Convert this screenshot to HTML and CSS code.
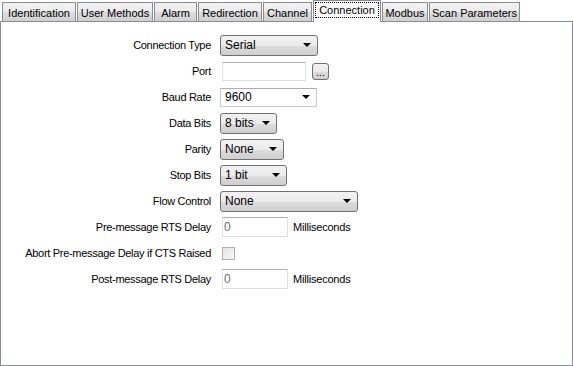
FILE: index.html
```html
<!DOCTYPE html>
<html lang="en">
<head>
    <meta charset="UTF-8">
    <title>Connection</title>
    <link rel="stylesheet" href="styles.css">
</head>
<body>
    <div class="tabs">
        <div class="tab t-ident">Identification</div>
        <div class="tab t-user">User Methods</div>
        <div class="tab t-alarm">Alarm</div>
        <div class="tab t-redir">Redirection</div>
        <div class="tab t-chan">Channel</div>
        <div class="tab active t-conn"><span class="focus">Connection</span></div>
        <div class="tab t-mod">Modbus</div>
        <div class="tab t-scan">Scan Parameters</div>
    </div>

    <div class="panel">
        <div class="row">
            <div class="label">Connection Type</div>
            <div class="combo raised w-type">Serial<span class="arrow"></span></div>
        </div>
        <div class="row">
            <div class="label">Port</div>
            <div class="textbox w-port"></div>
            <div class="browse">...</div>
        </div>
        <div class="row">
            <div class="label">Baud Rate</div>
            <div class="combo flat w-baud">9600<span class="arrow"></span></div>
        </div>
        <div class="row">
            <div class="label">Data Bits</div>
            <div class="combo raised w-data">8 bits<span class="arrow"></span></div>
        </div>
        <div class="row">
            <div class="label">Parity</div>
            <div class="combo raised w-parity">None<span class="arrow"></span></div>
        </div>
        <div class="row">
            <div class="label">Stop Bits</div>
            <div class="combo raised w-stop">1 bit<span class="arrow"></span></div>
        </div>
        <div class="row">
            <div class="label">Flow Control</div>
            <div class="combo raised w-flow">None<span class="arrow"></span></div>
        </div>
        <div class="row">
            <div class="label">Pre-message RTS Delay</div>
            <div class="textbox w-delay">0</div>
            <div class="unit">Milliseconds</div>
        </div>
        <div class="row">
            <div class="label">Abort Pre-message Delay if CTS Raised</div>
            <div class="checkbox"></div>
        </div>
        <div class="row">
            <div class="label">Post-message RTS Delay</div>
            <div class="textbox w-delay">0</div>
            <div class="unit">Milliseconds</div>
        </div>
    </div>
</body>
</html>
```

FILE: styles.css
```css
body {
    margin: 0;
    width: 573px;
    height: 366px;
    background: #ffffff;
    font-family: "Liberation Sans", Arial, sans-serif;
    font-size: 11px;
    color: #000000;
    overflow: hidden;
}

/* tab strip */
.tabs {
    display: flex;
    align-items: flex-end;
    height: 21px;
    padding-left: 2px;
    position: relative;
    z-index: 1;
}

.tab {
    box-sizing: border-box;
    height: 19px;
    margin-right: 1px;
    border: 1px solid #898c95;
    border-bottom: none;
    background: linear-gradient(#f2f2f2 0%, #ebebeb 50%, #dddddd 51%, #cfcfcf 100%);
    display: flex;
    align-items: center;
    justify-content: center;
    padding-top: 1px;
    white-space: nowrap;
}

.tab.active {
    height: 22px;
    margin-bottom: -1px;
    background: #ffffff;
    padding-top: 0;
    padding-bottom: 3px;
}

.focus {
    outline: 1px dotted #000000;
    outline-offset: 1px;
    padding: 0 2px;
}

.t-ident { width: 74px; }
.t-user { width: 76px; }
.t-alarm { width: 43px; }
.t-redir { width: 64px; }
.t-chan { width: 49px; }
.t-conn { width: 68px; }
.t-mod { width: 46px; }
.t-scan { width: 91px; }

/* page */
.panel {
    box-sizing: border-box;
    height: 345px;
    border: 1px solid #898c95;
    padding-top: 10px;
}

.row {
    display: flex;
    align-items: center;
    height: 26px;
}

.label {
    width: 210px;
    text-align: right;
    margin-right: 9px;
    white-space: nowrap;
    letter-spacing: -0.3px;
}

.combo {
    box-sizing: border-box;
    position: relative;
    display: flex;
    align-items: center;
    padding-left: 4px;
    font-size: 12px;
}

.combo.raised {
    height: 21px;
    border: 1px solid #707070;
    border-radius: 3px;
    background: linear-gradient(#f2f2f2 0%, #ebebeb 50%, #dddddd 51%, #cfcfcf 100%);
}

.combo.flat {
    height: 19px;
    border: 1px solid #c5c9d0;
    border-top-color: #abadb3;
    background: #ffffff;
}

.arrow {
    position: absolute;
    right: 6px;
    top: 50%;
    margin-top: -2px;
    width: 0;
    height: 0;
    border-left: 4px solid transparent;
    border-right: 4px solid transparent;
    border-top: 4px solid #000000;
}

.w-type { width: 98px; height: 22px; }
.w-baud { width: 97px; }
.w-data { width: 57px; }
.w-parity { width: 64px; }
.w-stop { width: 67px; }
.w-flow { width: 138px; }

.textbox {
    box-sizing: border-box;
    margin-left: 2px;
    height: 20px;
    border: 1px solid #dbdfe6;
    border-top-color: #abadb3;
    border-left-color: #e2e3ea;
    background: #ffffff;
    color: #6d6d6d;
    font-size: 12px;
    padding-left: 1px;
    display: flex;
    align-items: center;
}

.w-port { width: 84px; height: 19px; }
.w-delay { width: 66px; }

.browse {
    box-sizing: border-box;
    width: 17px;
    height: 17px;
    margin-left: 6px;
    border: 1px solid #707070;
    border-radius: 3px;
    background: linear-gradient(#f2f2f2 0%, #ebebeb 50%, #dddddd 51%, #cfcfcf 100%);
    font-size: 10px;
    text-align: center;
    line-height: 17px;
}

.unit {
    margin-left: 5px;
    letter-spacing: -0.2px;
}

.checkbox {
    box-sizing: border-box;
    margin-left: 2px;
    width: 13px;
    height: 13px;
    border: 1px solid #b1b1b1;
    background: linear-gradient(135deg, #e4e4e4, #f7f7f7);
}
```
